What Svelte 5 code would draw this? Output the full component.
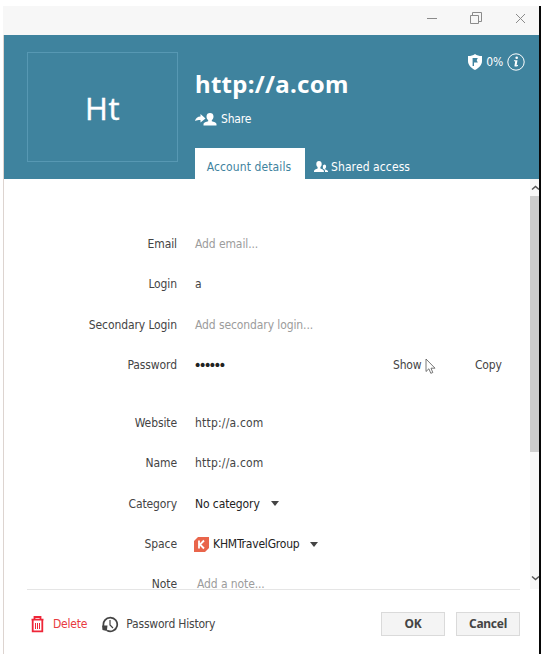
<script>
  const fields = [
    { label: 'Email', value: 'Add email...', kind: 'hint' },
    { label: 'Login', value: 'a', kind: 'text' },
    { label: 'Secondary Login', value: 'Add secondary login...', kind: 'hint' },
    { label: 'Password', value: '••••••', kind: 'password' },
    { label: 'Website', value: 'http://a.com', kind: 'text', gap: true },
    { label: 'Name', value: 'http://a.com', kind: 'text' },
    { label: 'Category', value: 'No category', kind: 'select' },
    { label: 'Space', value: 'KHMTravelGroup', kind: 'select', badge: true },
    { label: 'Note', value: 'Add a note...', kind: 'hint', note: true }
  ];
</script>

<div class="window">
  <div class="titlebar">
    <svg width="112" height="29" viewBox="0 0 112 29" fill="none" stroke="#8b8b8b">
      <path d="M0 12.500h10M43.500 9.500h8v8h-8zM45.500 9V6.500h9v9h-3M89 8l9 9M98 8l-9 9" />
    </svg>
  </div>

  <header>
    <div class="avatar">Ht</div>
    <div class="heading">
      <h1>http://a.com</h1>
      <div class="share">
        <svg width="22" height="13" viewBox="0 0 22 13" fill="#fff">
          <path d="M0 8C.8 5 2.500 3.500 5.500 3.500V1L10.500 5.500 5.500 9.500V7C3 7 2 7 0 8z" />
          <path d="M15 0c2 0 3.500 1.200 3.500 3.400 0 1.700-.8 3-1.700 3.800v1c2 .7 4.700 1.200 4.700 3V12.500H8.500v-1.300c0-1.800 2.700-2.300 4.700-3v-1c-.9-.8-1.700-2.100-1.700-3.800C11.500 1.200 13 0 15 0z" />
        </svg>
        <span>Share</span>
      </div>
      <div class="tabs">
        <div class="tab active">Account details</div>
        <div class="tab">
          <svg width="15" height="12" viewBox="0 0 15 12" fill="#fff">
            <path d="M5 0c1.700 0 2.700 1 2.700 2.900 0 1.500-.6 2.500-1.300 3.200v1.300C8 8.100 9.900 8.600 9.900 10v1H0v-1c0-1.400 2-1.900 3.600-2.600V6.100C2.900 5.400 2.300 4.400 2.300 2.900 2.300 1 3.300 0 5 0z" />
            <path d="M10.300 3.500c1.200 0 1.800.8 1.800 1.900 0 .9-.4 1.700-.9 2.100v.9c1.200.5 2.800.8 2.800 1.900v.7h-3V10c0-1.200-.8-1.700-1.700-2.200l-.4-.4V4.500z" />
          </svg>
          <span>Shared access</span>
        </div>
      </div>
    </div>
    <div class="score">
      <svg width="14" height="16" viewBox="0 0 14 16">
        <path d="M7 0c2 1.500 4 2 7 2v5c0 4-3 7-7 9C3 14 0 11 0 7V2c3 0 5-.5 7-2z" fill="#fff" />
        <path d="M4.600 12V4h5.200L8.700 6.200 9.800 8.500H6V12z" fill="#3f839e" />
      </svg>
      <span>0%</span>
      <svg width="18" height="18" viewBox="0 0 18 18">
        <circle cx="9" cy="9" r="8.200" fill="none" stroke="#fff" />
        <circle cx="9.700" cy="4.800" r="1.300" fill="#fff" />
        <path d="M7 7.200h3.500L9.600 12.200l1.500-.5-.2 1.200c-1.800 1-3.700 1-3.400-.5L8.200 8.200H6.900z" fill="#fff" />
      </svg>
    </div>
  </header>

  <main>
    <div class="form">
      {#each fields as f}
        <div class="row" class:gap={f.gap} class:note={f.note}>
          <span class="label">{f.label}</span>
          <span class="value {f.kind}" class:space={f.badge}>
            {#if f.badge}
              <svg class="badge" width="15" height="15" viewBox="0 0 15 15">
                <path d="M4 0h11v11l-4 4H0V4z" fill="#e9654b" />
                <path d="M5 3.500v8M10 3.500l-4 4 4 4" fill="none" stroke="#fff" stroke-width="1.800" />
              </svg>
            {/if}
            <span>{f.value}</span>
            {#if f.kind === 'select'}
              <svg class="arrow" width="8" height="5" viewBox="0 0 8 5"><path d="M0 0h8L4 5z" fill="#444" /></svg>
            {/if}
          </span>
          {#if f.kind === 'password'}
            <span class="show">Show
              <svg class="cursor" width="12" height="17" viewBox="0 0 12 17">
                <path d="M1 1v12.500l2.900-2.700 1.900 4.500 2-.8L6 10.200h4z" fill="#fff" stroke="#555" stroke-width=".8" />
              </svg>
            </span>
            <span class="copy">Copy</span>
          {/if}
        </div>
      {/each}
    </div>
    <div class="scrollbar">
      <svg width="9" height="17" viewBox="0 0 9 17"><path d="M2 10.500L5.500 7.500l3.500 3" fill="none" stroke="#555" stroke-width="1.500" /></svg>
      <div class="thumb"></div>
      <svg class="down" width="9" height="17" viewBox="0 0 9 17"><path d="M2 4.500L5.500 7.500l3.500-3" fill="none" stroke="#555" stroke-width="1.500" /></svg>
    </div>
  </main>

  <footer>
    <svg width="13" height="17" viewBox="0 0 13 17" fill="none" stroke="#ee2638">
      <path d="M.5 3.700h12M3.500 3V1h6v2M1.700 4v11.300h9.600V4" stroke-width="1.800" />
      <path d="M4.500 7v6M6.500 7v6M8.500 7v6" />
    </svg>
    <span class="delete">Delete</span>
    <svg class="clock" width="17" height="17" viewBox="0 0 17 17" fill="none" stroke="#444">
      <path d="M1.600 10A6.900 6.900 0 1 1 5 14.500" stroke-width="1.700" />
      <path d="M8 4v5l3 3" stroke-width="1.200" />
      <path d="M0 9.500h5.500L4.800 15 .5 14z" fill="#444" stroke="none" />
    </svg>
    <span class="history">Password History</span>
    <button class="ok">OK</button>
    <button>Cancel</button>
  </footer>
</div>

<style>
  :global(body) { margin: 0; background: #fff; }
  .window {
    box-sizing: border-box;
    width: 541px;
    height: 648px;
    margin-top: 6px;
    padding-left: 3px;
    border-right: 2px solid #080808;
    background: linear-gradient(90deg, transparent 3px, #ddd4d0 3px 4px, #fff 4px);
    font: 12px/18px 'DejaVu Sans Condensed', 'DejaVu Sans', sans-serif;
    letter-spacing: -0.2px;
    color: #444;
    white-space: nowrap;
    display: flex;
    flex-direction: column;
  }
  svg { display: block; flex: none; }
  .titlebar { height: 29px; background: #f7f7f7; display: flex; justify-content: flex-end; }
  header { height: 144px; margin-left: 1px; background: #3f839e; color: #fff; display: flex; }
  .avatar {
    box-sizing: border-box;
    width: 151px;
    height: 110px;
    margin: 17px 0 0 23px;
    border: 1px solid #5798b3;
    font: 31px/110px 'Open Sans', sans-serif;
    -webkit-text-stroke: 0.4px #fff;
    text-align: center;
    letter-spacing: 0.5px;
  }
  .heading { margin-left: 17px; display: flex; flex-direction: column; }
  h1 { margin: 34px 0 0; font: bold 24px/30px 'Noto Sans', sans-serif; letter-spacing: 0.3px; }
  .share { margin-top: 11px; height: 18px; display: flex; align-items: center; gap: 4px; }
  .tabs { margin-top: auto; height: 31px; display: flex; }
  .tab { display: flex; align-items: center; gap: 2px; padding: 6px 0 0 9px; letter-spacing: 0.1px; }
  .tab.active { box-sizing: border-box; width: 110px; padding: 6px 2px 0 0; justify-content: center; background: #fff; color: #3f839e; }
  .score { margin: 17px 14px 0 auto; height: 20px; display: flex; align-items: center; gap: 4px; }
  main { height: 410px; display: flex; overflow: hidden; margin-left: 1px; }
  .form { flex: 1; padding-top: 44.500px; }
  .row { height: 40.500px; display: flex; align-items: center; }
  .row.gap { margin-top: 17px; }
  .row.note { height: 38px; }
  .label { width: 173px; text-align: right; letter-spacing: -0.1px; }
  .value { margin-left: 18px; width: 198px; display: flex; align-items: center; }
  .text { letter-spacing: 0.2px; }
  .password { font: 14px/18px 'DejaVu Sans', sans-serif; letter-spacing: -3.300px; margin-left: 16.500px; width: 199.500px; color: #222; }
  .hint { color: #9c9c9c; letter-spacing: -0.1px; }
  .note .value { padding-left: 2px; }
  .select { color: #222; letter-spacing: -0.1px; }
  .space { letter-spacing: -0.2px; }
  .badge { margin: 0 4px 0 -1px; }
  .arrow { margin-left: 11px; }
  .show { position: relative; width: 82px; }
  .cursor { position: absolute; left: 32px; top: 2px; }
  .scrollbar { width: 9px; background: #f7f7f7; display: flex; flex-direction: column; }
  .thumb { height: 256px; background: #cdcdcd; }
  .down { margin-top: auto; }
  footer { flex: 1; margin: 0 19px 0 24px; border-top: 1px solid #e5e5e5; display: flex; align-items: flex-start; }
  footer > svg { margin: 26px 0 0 4px; }
  footer > span { margin: 25px 0 0 9px; }
  .delete { color: #e83a40; }
  footer > .clock { margin-left: 15px; }
  .history { margin-left: 7px; }
  button {
    box-sizing: border-box;
    width: 64px;
    height: 24px;
    margin: 22px 0 0 11px;
    padding: 0;
    border: 1px solid #dadada;
    background: #f4f4f4;
    font: bold 12px/22px 'Noto Sans', sans-serif;
    letter-spacing: -0.300px;
    color: #444;
  }
  .ok { margin-left: auto; }
</style>
